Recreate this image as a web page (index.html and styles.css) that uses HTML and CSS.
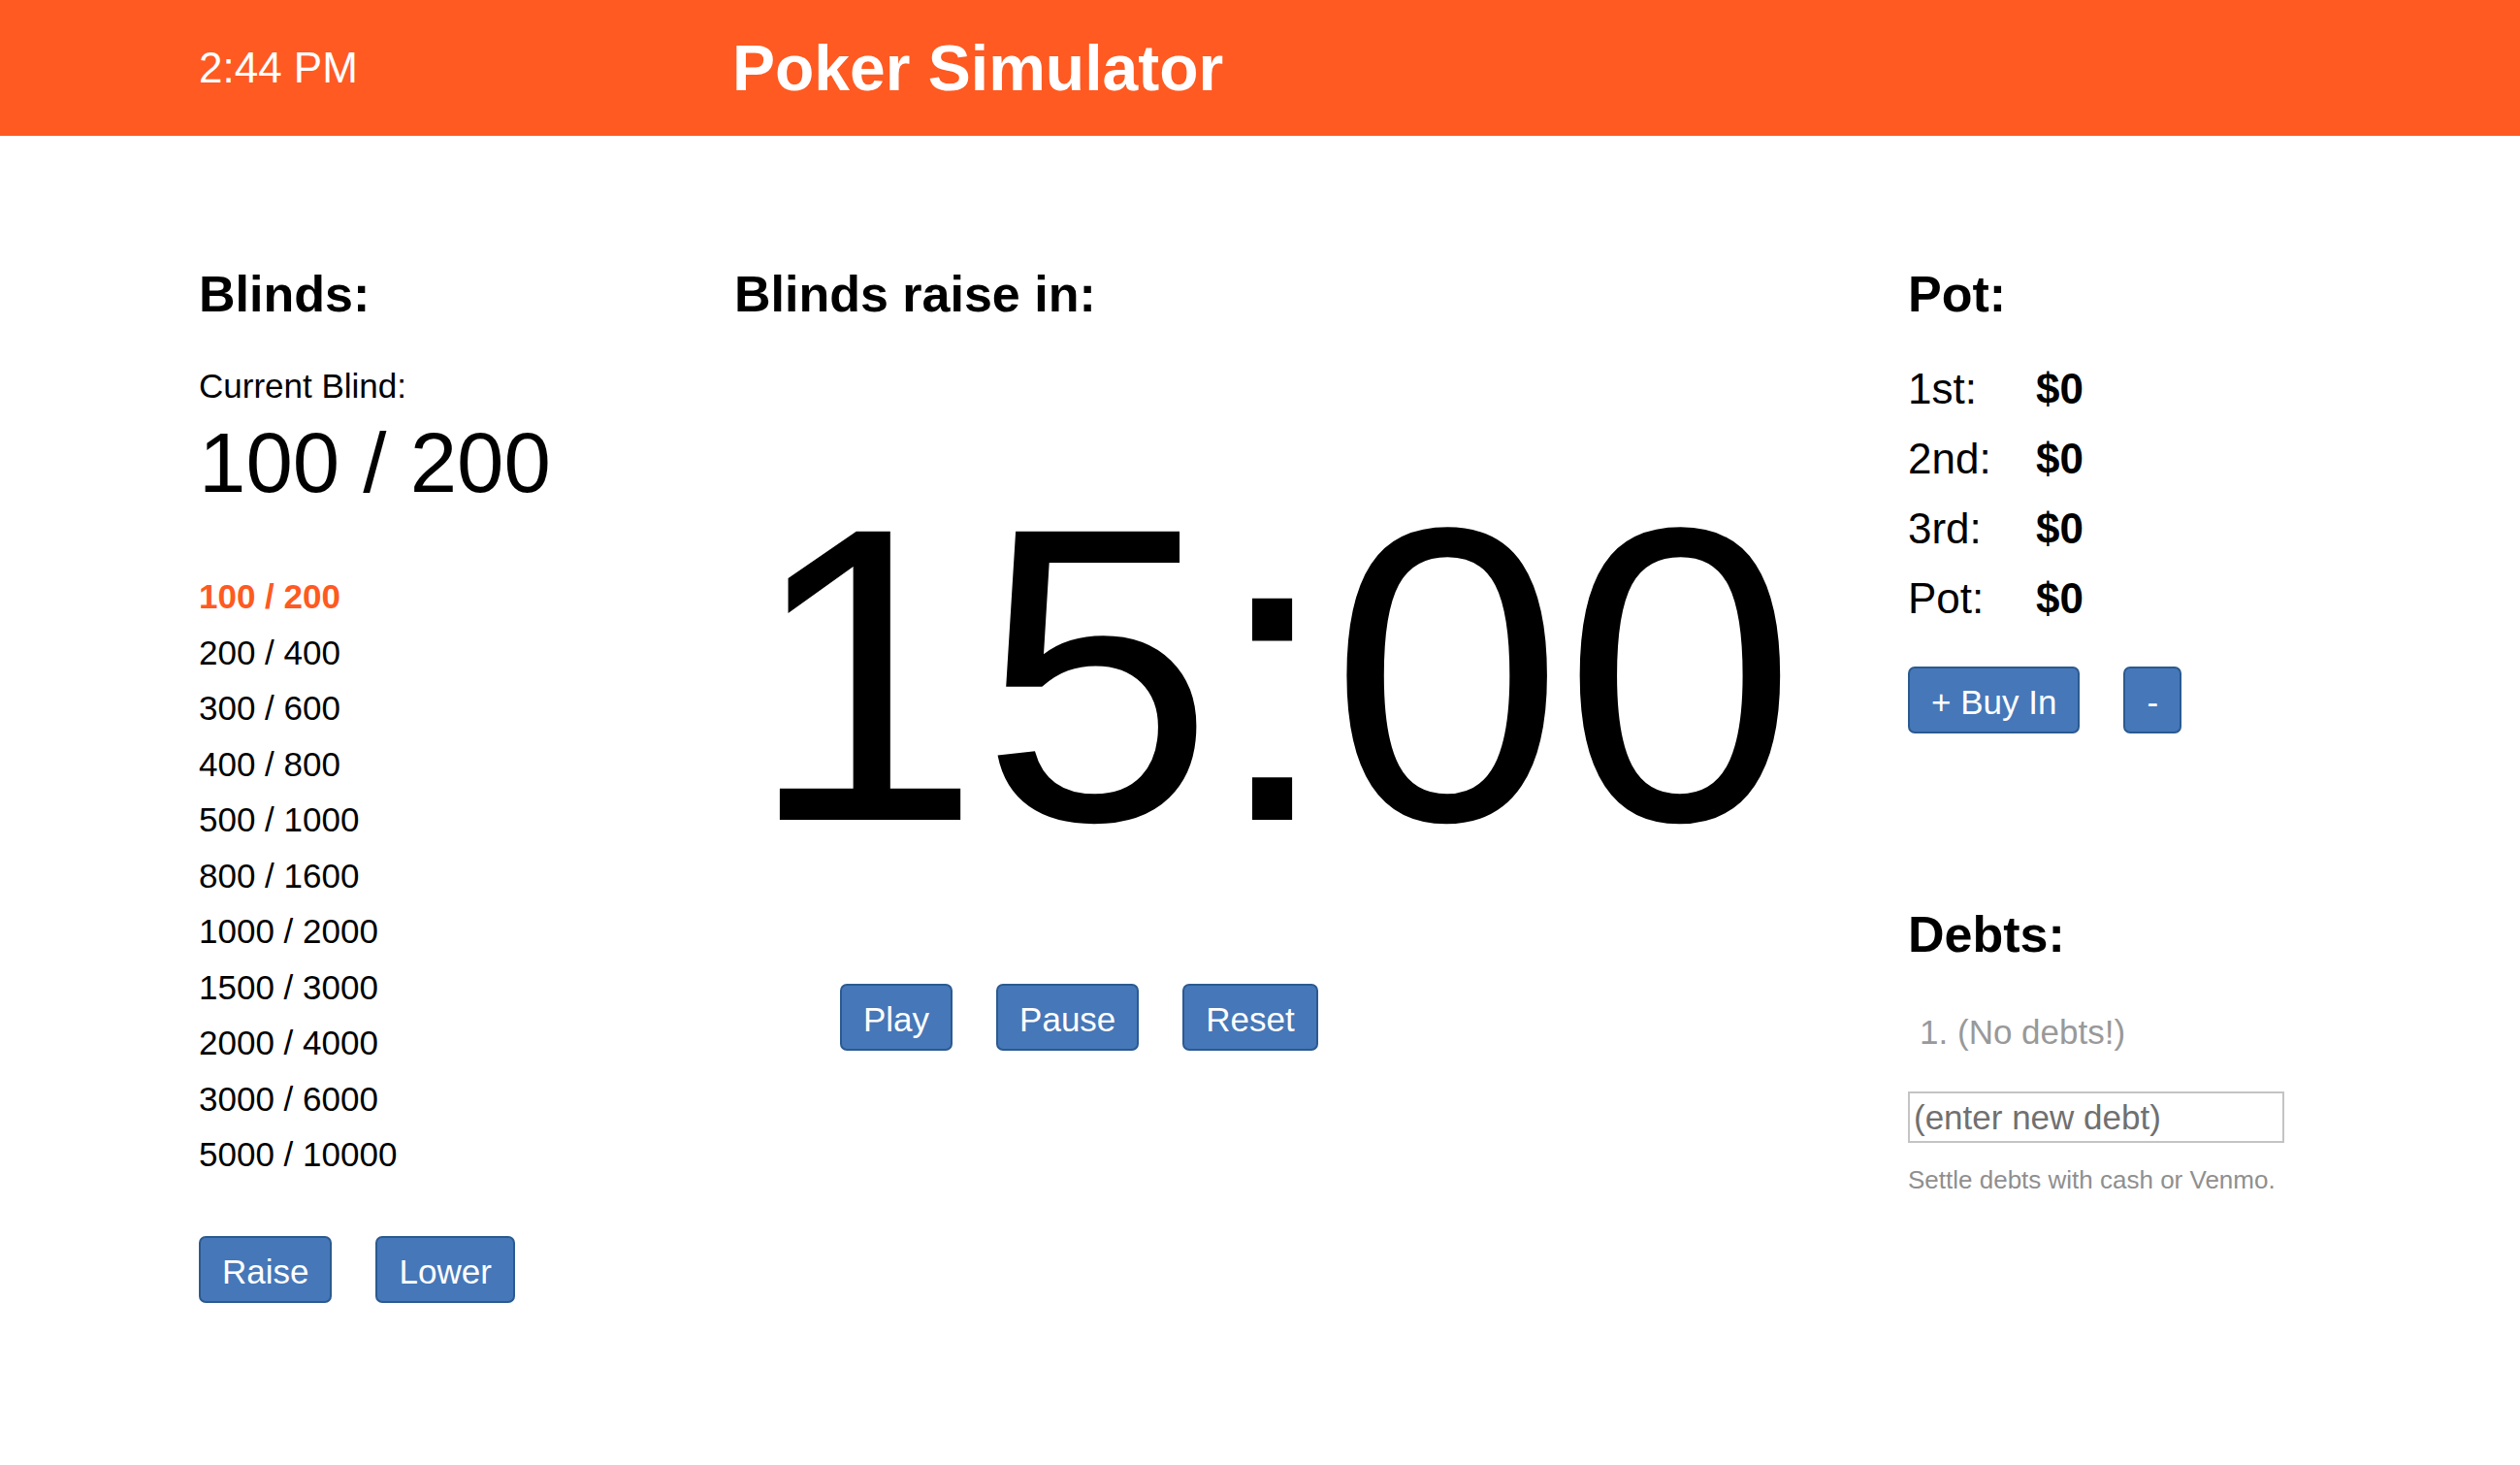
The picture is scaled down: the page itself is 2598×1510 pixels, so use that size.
FILE: index.html
```html
<!DOCTYPE html>
<html lang="en">
<head>
<meta charset="utf-8">
<title>Poker Simulator</title>
<link rel="stylesheet" href="styles.css">
</head>
<body>
<header class="topbar">
  <div class="clock">2:44 PM</div>
  <div class="title">Poker Simulator</div>
</header>
<main class="layout">
  <section class="col col-blinds">
    <h2 class="heading">Blinds:</h2>
    <div class="current-label">Current Blind:</div>
    <div class="current-value">100 / 200</div>
    <ul class="blind-list">
      <li class="active">100 / 200</li>
      <li>200 / 400</li>
      <li>300 / 600</li>
      <li>400 / 800</li>
      <li>500 / 1000</li>
      <li>800 / 1600</li>
      <li>1000 / 2000</li>
      <li>1500 / 3000</li>
      <li>2000 / 4000</li>
      <li>3000 / 6000</li>
      <li>5000 / 10000</li>
    </ul>
    <div class="btn-row btn-row-blinds">
      <button class="btn">Raise</button>
      <button class="btn">Lower</button>
    </div>
  </section>
  <section class="col col-timer">
    <h2 class="heading">Blinds raise in:</h2>
    <div class="timer">15:00</div>
    <div class="btn-row btn-row-timer">
      <button class="btn">Play</button>
      <button class="btn">Pause</button>
      <button class="btn">Reset</button>
    </div>
  </section>
  <section class="col col-pot">
    <h2 class="heading">Pot:</h2>
    <div class="pot-table">
      <div class="pot-row"><span class="pot-label">1st:</span><span class="pot-value">$0</span></div>
      <div class="pot-row"><span class="pot-label">2nd:</span><span class="pot-value">$0</span></div>
      <div class="pot-row"><span class="pot-label">3rd:</span><span class="pot-value">$0</span></div>
      <div class="pot-row"><span class="pot-label">Pot:</span><span class="pot-value">$0</span></div>
    </div>
    <div class="btn-row btn-row-pot">
      <button class="btn">+ Buy In</button>
      <button class="btn">-</button>
    </div>
    <h2 class="heading debts-heading">Debts:</h2>
    <ol class="debt-list">
      <li>(No debts!)</li>
    </ol>
    <input class="debt-input" type="text" placeholder="(enter new debt)">
    <p class="help">Settle debts with cash or Venmo.</p>
  </section>
</main>
</body>
</html>
```

FILE: styles.css
```css
* {
  box-sizing: border-box;
}

html, body {
  margin: 0;
  padding: 0;
  background: #ffffff;
}

body {
  font-family: "Liberation Sans", Arial, Helvetica, sans-serif;
  color: #000000;
  font-size: 35px;
}

.topbar {
  height: 140px;
  background: #fe5a21;
  color: #ffffff;
  display: grid;
  grid-template-columns: 552px 1fr;
  align-items: center;
  padding-left: 205px;
}

.clock {
  font-size: 44px;
  line-height: 50px;
}

.title {
  font-size: 66px;
  font-weight: bold;
  line-height: 76px;
  margin-left: -2px;
}

.layout {
  display: grid;
  grid-template-columns: 552px 1210px 1fr;
  padding: 133px 0 0 205px;
  align-items: start;
}

.col {
  display: flex;
  flex-direction: column;
  align-items: flex-start;
}

.heading {
  margin: 0;
  font-size: 52px;
  font-weight: bold;
  line-height: 60px;
}

.current-label {
  margin-top: 40px;
  font-size: 35px;
  line-height: 50px;
}

.current-value {
  margin-top: 4px;
  font-size: 87px;
  line-height: 100px;
}

.blind-list {
  list-style: none;
  margin: 59px 0 0;
  padding: 0;
}

.blind-list li {
  font-size: 35px;
  line-height: 57.5px;
}

.blind-list li.active {
  color: #fe5a21;
  font-weight: bold;
}

.btn-row {
  display: flex;
  gap: 45px;
}

.btn-row-blinds {
  margin-top: 55px;
}

.btn {
  font-family: "Liberation Sans", Arial, Helvetica, sans-serif;
  font-size: 35px;
  color: #ffffff;
  background: #4677b8;
  border: 2px solid #2b5a90;
  border-radius: 7px;
  height: 69px;
  padding: 4px 22px 0;
  line-height: 61px;
  cursor: pointer;
}

.timer {
  margin-top: 147px;
  margin-left: 14px;
  font-size: 432px;
  line-height: 432px;
  letter-spacing: 0;
}

.btn-row-timer {
  margin-top: 102px;
  margin-left: 109px;
}

.pot-table {
  margin-top: 32px;
  display: flex;
  flex-direction: column;
}

.pot-row {
  display: flex;
  font-size: 44px;
  line-height: 72px;
}

.pot-label {
  width: 132px;
}

.pot-value {
  font-weight: bold;
}

.btn-row-pot {
  margin-top: 34px;
}

.debts-heading {
  margin-top: 177px;
}

.debt-list {
  margin: 46px 0 0;
  padding-left: 51px;
  color: #999999;
  font-size: 35px;
  line-height: 50px;
}

.debt-input {
  margin-top: 36px;
  width: 388px;
  height: 53px;
  border: 2px solid #c4c4c4;
  border-radius: 0;
  padding: 0 4px;
  font-family: "Liberation Sans", Arial, Helvetica, sans-serif;
  font-size: 35px;
  color: #333333;
  outline: none;
}

.debt-input::placeholder {
  color: #707070;
}

.help {
  margin: 20px 0 0;
  font-size: 26px;
  line-height: 36px;
  color: #8f8f8f;
}
```
